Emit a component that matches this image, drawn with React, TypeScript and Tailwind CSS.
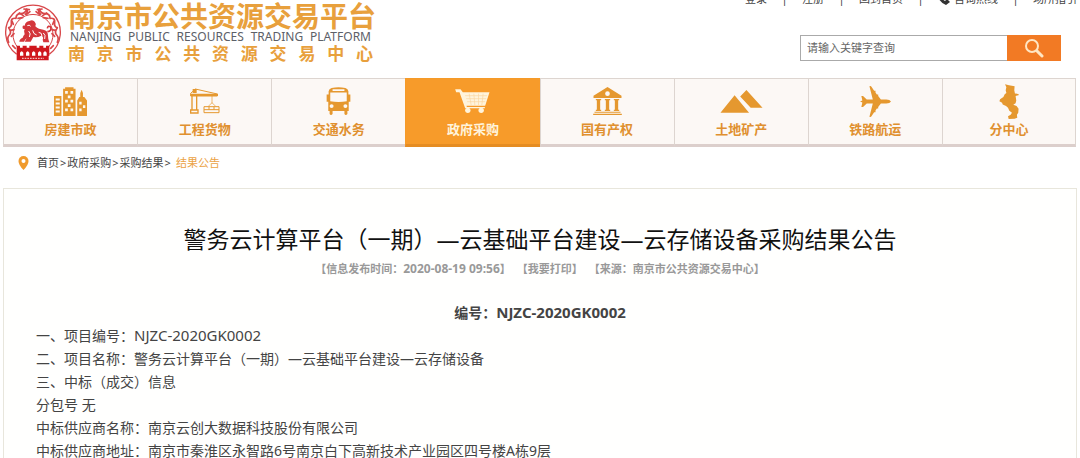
import type { ReactNode } from 'react';
import clsx from 'clsx';

const ORANGE = '#e5982f';

const Emblem = () => (
  <svg viewBox="0 0 174 174" className="h-[58px] w-[58px] shrink-0" aria-hidden="true">
    <path d="M38 154 A82 82 0 1 1 136 154" fill="none" stroke="#d8474a" strokeWidth="4" />
    <path d="M42 134 A60 60 0 1 1 132 134" fill="none" stroke="#d8474a" strokeWidth="3" />
    <g fill="none" stroke="#d8474a" strokeWidth="5" strokeLinecap="round" strokeLinejoin="round">
      <path d="M14 118q-6-14 2-22t-2-22q10-2 8-16t14-12q0-14 14-14t18-14q6 10-4 16" />
      <path d="M22 100l8-8M20 82l10-2M28 64l-4-10M42 46l14-2M46 30l12 8M60 18l16 2M68 34l10-8" />
      <path d="M160 118q6-14-2-22t2-22q-10-2-8-16t-14-12q0-14-14-14t-18-14q-6 10 4 16" />
      <path d="M152 100l-8-8M154 82l-10-2M146 64l4-10M132 46l-14-2M128 30l-12 8M114 18l-14 2M106 34l-10-8" />
      <path d="M26 128l8 8M148 128l-8 8" />
    </g>
    <path
      d="M62 68q2-12 14-14q10-6 16 2q6 6 2 14q10 10 24 10q14 2 14 18q0 12 4 20h-18l-2-8q4-8-4-12q-12 6-24 4l-8 14H62l6-10q-4 2-8 10H46q0-8 10-12q2-6 6-10q-4-10 0-16q-8 0-6-6q-2-6 6-4z"
      fill="#d3363b"
    />
    <path d="M70 68q6-4 10 2M74 84q8 8 2 18M86 82q2 12 12 14M104 88q10 0 10 12M118 90q8 6 4 18" fill="none" stroke="#fff" strokeWidth="3" />
    <path d="M130 86q14-2 10-14q-8-6-10 4" fill="none" stroke="#d3363b" strokeWidth="5" />
    <path d="M38 128h10v6h8v-6h12v6h8v-6h22v6h8v-6h12v6h8v-6h10v31H134V172H38z" fill="#cf171d" />
    <path d="M48 158v-9q5-9 10 0v9zM66 158v-9q5-9 10 0v9zM84 158v-9q5-9 10 0v9zM102 158v-9q5-9 10 0v9zM118 158v-9q5-9 10 0v9z" fill="#fff" />
    <path d="M54 166h66" stroke="#f3b9b9" strokeWidth="4" strokeDasharray="5 3" />
  </svg>
);

const BuildingIcon = () => (
  <svg viewBox="0 0 98 86" className="h-[29px] w-[33px]" aria-hidden="true">
    <path d="M0 27h22v59H0zM27 5h6V1h25v4h6v81H27zM69 86V40l6-10h3V18l4-10l4 10v12h4l8 10v46z" fill={ORANGE} />
    <g fill="#fcf8f5">
      <path d="M5 34h12v6H5zM5 46h12v6H5zM5 58h12v6H5zM5 70h12v6H5z" />
      <path d="M33 12h8v8h-8zM49 12h8v8h-8zM41 25h8v8h-8zM33 38h8v8h-8zM49 38h8v8h-8zM41 51h8v8h-8zM33 64h8v8h-8zM49 64h8v8h-8z" />
      <path d="M75 44h7v8h-7zM86 54h7v8h-7zM75 64h7v8h-7z" />
    </g>
  </svg>
);

const CraneIcon = () => (
  <svg viewBox="0 0 90 78" className="h-[26px] w-[30px]" aria-hidden="true">
    <path d="M2 16L16 3l66 15v6H2z" fill="none" stroke={ORANGE} strokeWidth="3" />
    <path d="M2 17h82v7H2zM8 3h12v12H8z" fill={ORANGE} />
    <path d="M6 24v42M20 24v42M2 66h22v9H2z" fill="none" stroke={ORANGE} strokeWidth="4" />
    <path d="M66 24v22M66 44l-12 12M66 44l12 12" fill="none" stroke={ORANGE} strokeWidth="2" />
    <path d="M42 56h45v18H42zM42 65h45M57 56v9M72 56v9" fill="none" stroke={ORANGE} strokeWidth="3" />
  </svg>
);

const BusIcon = () => (
  <svg viewBox="0 0 74 85" className="h-[28px] w-[25px]" aria-hidden="true">
    <path
      d="M16 3Q37-2 58 3q8 2 9 10v10h6v22h-5v28h-4v9q-5 6-9 0v-9H19v9q-5 6-9 0v-9H6V45H1V23h6V13q1-8 9-10z"
      fill={ORANGE}
    />
    <path d="M19 7h36v5H19zM12 17h50v26q-25 5-50 0z" fill="#fcf8f5" />
    <circle cx="16" cy="58" r="6" fill="#fcf8f5" />
    <circle cx="58" cy="58" r="6" fill="#fcf8f5" />
  </svg>
);

const CartIcon = () => (
  <svg viewBox="0 0 104 72" className="h-[24px] w-[35px]" aria-hidden="true">
    <path d="M0 1h16l7 9h80L90 50H34l1 4h54v4H30L13 10H3z" fill="#fff4dc" />
    <path d="M30 20h66M33 29h60M36 38h54M42 14l6 34M56 14l3 34M70 14v34M84 14l-4 34" stroke="#fbd7a0" strokeWidth="2" />
    <circle cx="38" cy="64" r="8" fill="#fff4dc" />
    <circle cx="78" cy="64" r="8" fill="#fff4dc" />
  </svg>
);

const BankIcon = () => (
  <svg viewBox="0 0 86 84" className="h-[28px] w-[29px]" aria-hidden="true">
    <path d="M43 0l42 26v7H1v-7z" fill={ORANGE} />
    <circle cx="43" cy="20" r="7" fill="#fcf8f5" />
    <path d="M8 36h16v4h-3v28h3v4H8v-4h3V40H8zM35 36h16v4h-3v28h3v4H35v-4h3V40h-3zM62 36h16v4h-3v28h3v4H62v-4h3V40h-3zM4 74h78v3H4zM0 80h86v4H0z" fill={ORANGE} />
  </svg>
);

const MountainIcon = () => (
  <svg viewBox="0 0 128 70" className="h-[23px] w-[43px]" aria-hidden="true">
    <path d="M0 69L43 16l44 53zM60 20L79 0l49 54H92z" fill={ORANGE} />
  </svg>
);

const PlaneIcon = () => (
  <svg viewBox="0 0 92 92" className="h-[31px] w-[31px]" aria-hidden="true">
    <path
      d="M92 46q-3 6-14 6H62l-8 10v5h-4l-4 6v5h-4L34 90q-2 3-6 1l10-39H20L9 62H4l3-13l-7-3l7-3L4 30h5l11 10h18L28 1q4-2 6 1l8 12h4v5l4 6h4v5l8 10h16q11 0 14 6z"
      fill={ORANGE}
    />
  </svg>
);

const DistrictIcon = () => (
  <svg viewBox="0 0 58 106" className="h-[35px] w-[20px]" aria-hidden="true">
    <path
      d="M17 1l12 3l17 3l-1 12l2 10l11 1v4l-9 2l2 14l-2 8l-7 5l10 4l6 8l-1 12l-4 6l1 9l-8 3l-18 1l-2-8l8-5l4-6l-8-6l-4-9l-6-5l-10-5l-2-5l-8-5l2-6l10-7l4-8l5-4l-2-8l2-9z"
      fill={ORANGE}
    />
  </svg>
);

interface NavItem {
  label: string;
  icon: ReactNode;
  active?: boolean;
}

const NAV_ITEMS: NavItem[] = [
  { label: '房建市政', icon: <BuildingIcon /> },
  { label: '工程货物', icon: <CraneIcon /> },
  { label: '交通水务', icon: <BusIcon /> },
  { label: '政府采购', icon: <CartIcon />, active: true },
  { label: '国有产权', icon: <BankIcon /> },
  { label: '土地矿产', icon: <MountainIcon /> },
  { label: '铁路航运', icon: <PlaneIcon /> },
  { label: '分中心', icon: <DistrictIcon /> },
];

const TOP_LINKS = ['登录', '注册', '回到首页', '咨询热线', '场所指引'];

const PROJECT_NO = 'NJZC-2020GK0002';

const DETAILS = [
  '二、项目名称：警务云计算平台（一期）—云基础平台建设—云存储设备',
  '三、中标（成交）信息',
  '分包号 无',
  '中标供应商名称：南京云创大数据科技股份有限公司',
  '中标供应商地址：南京市秦淮区永智路6号南京白下高新技术产业园区四号楼A栋9层',
];

const Header = () => (
  <header className="flex h-[78px] justify-between">
    <a href="#" className="flex gap-[6px] pt-[3px] pl-1">
      <Emblem />
      <div className="flex w-[305px] flex-col text-[#e8a03c]">
        <span className="text-[28px] leading-[26px] font-bold whitespace-nowrap">南京市公共资源交易平台</span>
        <span className="px-[2px] text-[12px] leading-4 whitespace-nowrap text-[#5c6068] [text-align-last:justify]">
          NANJING PUBLIC RESOURCES TRADING PLATFORM
        </span>
        <span className="text-[17px] leading-[18px] font-bold whitespace-nowrap [text-align-last:justify]">
          南 京 市 公 共 资 源 交 易 中 心
        </span>
      </div>
    </a>

    <div className="flex flex-col items-end">
      <nav className="-mt-[7px] flex pr-[3px] text-[11px] leading-3 text-[#444]">
        {TOP_LINKS.map((text, i) => (
          <div key={text} className="flex">
            {i > 0 && <span className="w-[35px] text-center">|</span>}
            <a href="#" className="flex gap-1">
              {text === '咨询热线' && (
                <svg viewBox="0 0 12 12" className="h-3 w-3" aria-hidden="true">
                  <path d="M3 0L0 3q1 6 8 9l4-3l-3-3l-2 2q-2-1-3-3l2-2z" fill="#333" />
                </svg>
              )}
              {text}
            </a>
          </div>
        ))}
      </nav>
      <form className="mt-[30px] mr-[19px] flex h-[26px]">
        <input
          type="text"
          aria-label="请输入关键字查询"
          placeholder="请输入关键字查询"
          className="w-[207px] border border-r-0 border-[#aaa] bg-white px-[6px] text-[11px] placeholder:text-[#666] placeholder:opacity-100"
        />
        <button type="button" aria-label="搜索" className="flex w-[54px] items-center justify-center bg-[#f27a24]">
          <svg viewBox="0 0 20 20" className="h-5 w-5" fill="none" stroke="#ffe6c4" aria-hidden="true">
            <circle cx="8" cy="8" r="6" strokeWidth="2" />
            <path d="M13 13l5 5" strokeWidth="3" strokeLinecap="round" />
          </svg>
        </button>
      </form>
    </div>
  </header>
);

const MainNav = () => (
  <nav className="mr-1 ml-[3px] grid grid-cols-8">
    {NAV_ITEMS.map((item) => (
      <a
        key={item.label}
        href="#"
        className={clsx(
          'flex flex-col items-center border-t border-b-3 border-l pt-1 pb-[5px] text-[13px] leading-5 font-bold last:border-r',
          item.active
            ? 'border-[#f59a28] border-b-[#e58c22] bg-[#f79b2a] text-[#fff4dc]'
            : 'border-[#ddd5d0] border-b-[#dccfcc] bg-[#fcf8f5] text-[#e0902f]',
        )}
      >
        <span className="flex h-9 items-center">{item.icon}</span>
        {item.label}
      </a>
    ))}
  </nav>
);

const Arrow = () => <span className="px-px">&gt;</span>;

const Breadcrumb = () => (
  <nav className="flex h-[41px] items-start gap-2 pt-[6px] pl-[18px] text-[11px] leading-5 text-[#444]">
    <svg viewBox="0 0 10 14" className="mt-[3px] h-[14px] w-[11px]" aria-hidden="true">
      <path d="M5 0a5 5 0 0 1 5 5q0 4-5 9q-5-5-5-9a5 5 0 0 1 5-5z" fill="#f09a2c" />
      <circle cx="5" cy="5" r="2" fill="#fff" />
    </svg>
    <div>
      <a href="#">首页</a>
      <Arrow />
      <a href="#">政府采购</a>
      <Arrow />
      <a href="#">采购结果</a>
      <Arrow />
      <a href="#" className="pl-1 text-[#eba245]">结果公告</a>
    </div>
  </nav>
);

export default function App() {
  return (
    <div className="h-screen overflow-hidden bg-white font-['Noto_Sans','Noto_Sans_CJK_SC',sans-serif]">
      <Header />
      <MainNav />
      <Breadcrumb />
      <main className="mx-[3px] min-h-full border border-[#e8e6dc] bg-[#fffffe] px-8 pt-[34px]">
        <h1 className="text-center text-[23px] leading-8 text-[#111]">
          警务云计算平台（一期）—云基础平台建设—云存储设备采购结果公告
        </h1>
        <p className="mt-1 flex justify-center gap-[6px] text-[11px] leading-5 font-bold text-[#999]">
          <span>
            【信息发布时间：<span className="text-xs leading-5">2020-08-19 09:56</span>】
          </span>
          <a href="#">【我要打印】</a>
          <span>【来源：南京市公共资源交易中心】</span>
        </p>
        <div className="mt-[22px] text-sm leading-[23px] text-[#444]">
          <p className="text-center font-bold">
            编号：<span className="text-[15px]">{PROJECT_NO}</span>
          </p>
          <p>
            一、项目编号：<span className="text-[15px]">{PROJECT_NO}</span>
          </p>
          {DETAILS.map((line) => (
            <p key={line}>{line}</p>
          ))}
        </div>
      </main>
    </div>
  );
}
